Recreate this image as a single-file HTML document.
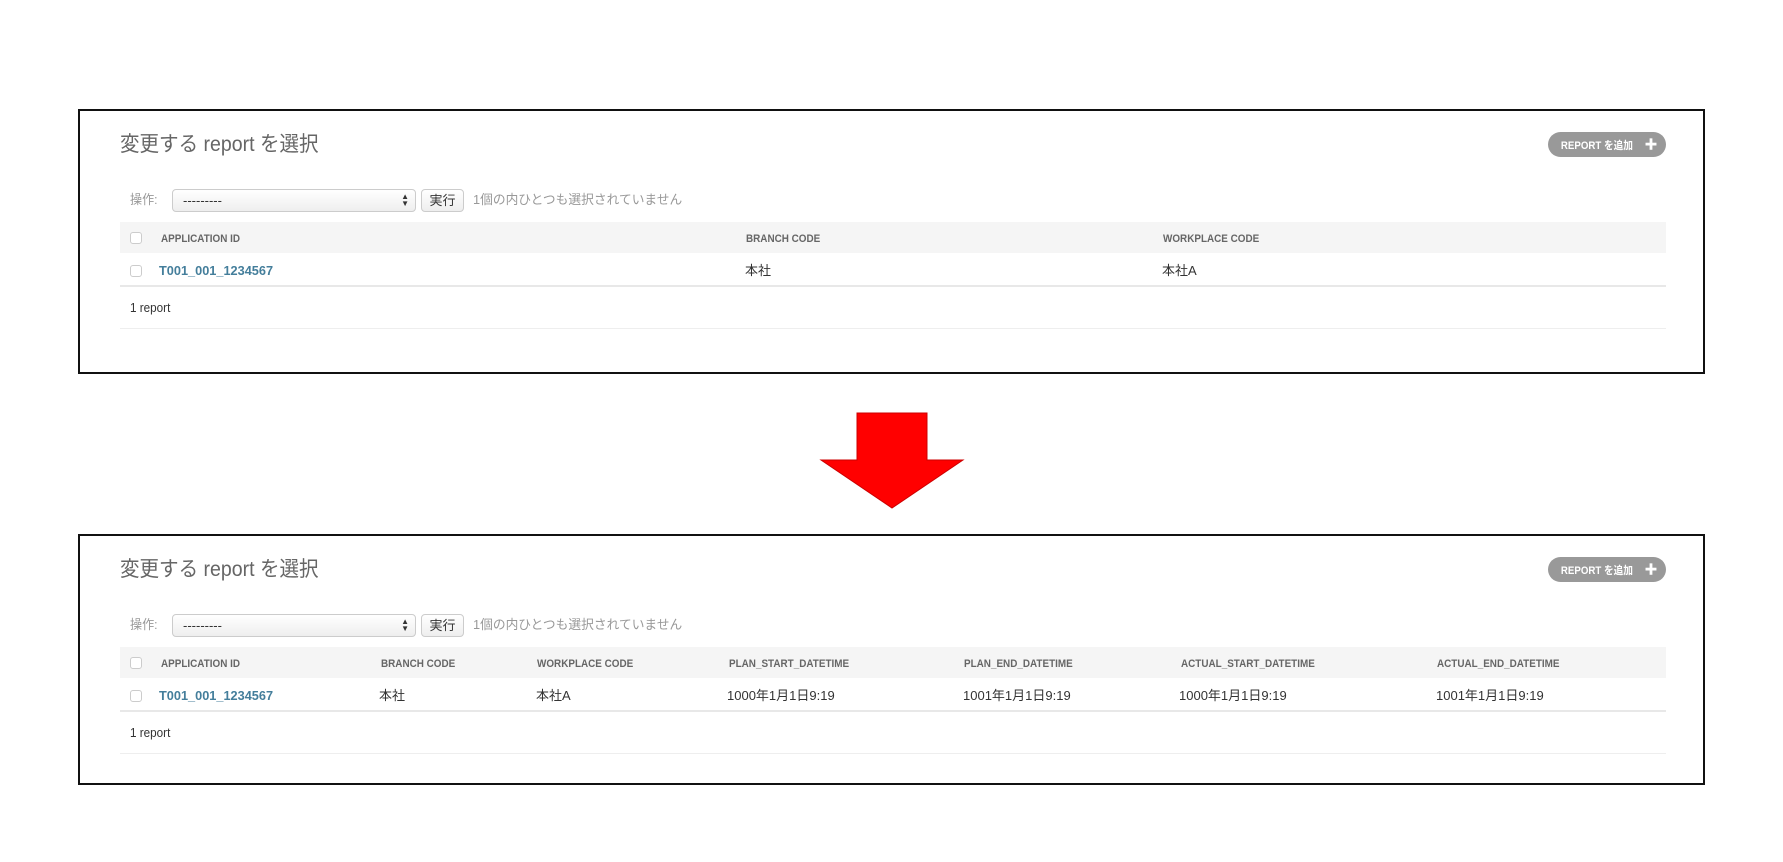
<!DOCTYPE html>
<html><head><meta charset="utf-8"><style>
*{margin:0;padding:0;box-sizing:border-box}
body{width:1783px;height:862px;background:#fff;position:relative;overflow:hidden;font-family:"Liberation Sans","Noto Sans CJK JP",sans-serif;color:#333}
.a{position:absolute;white-space:nowrap;line-height:16px}
.n{transform:scaleX(0.9);transform-origin:left center}
.box{position:absolute;left:78px;width:1627px;border:2px solid #111;background:#fff}
.title{font-size:21px;line-height:24px;color:#666;transform:scaleX(0.93);transform-origin:left center}
.btn{background:#999;color:#fff;border-radius:13px;font-size:11px;font-weight:bold;height:25px;width:118px;line-height:25px;text-align:center}
.lbl{font-size:13px;color:#999;transform:scaleX(0.93);transform-origin:left center}
.sel{height:23px;width:244px;border:1px solid #ccc;border-radius:4px;background:linear-gradient(#fff,#eee);font-size:13px;padding-left:10px;line-height:21px;color:#333}
.go{height:23px;width:43px;border:1px solid #ccc;border-radius:4px;background:linear-gradient(#fff,#eee);font-size:13px;line-height:21px;text-align:center}
.cnt{font-size:13px;color:#999;transform:scaleX(0.98);transform-origin:left center}
.hdr{height:31px;width:1546px;left:120px;background:#f5f5f5}
.row{height:34px;width:1546px;left:120px;border-bottom:2px solid #e8e8e8}
.line{height:1px;width:1546px;left:120px;background:#eee}
.cb{width:12px;height:12px;border:1px solid #ccc;border-radius:3px;background:#fff}
.th{font-size:11px;font-weight:bold;color:#666}
.td{font-size:13px;color:#333}
.lk{font-size:13px;font-weight:bold;color:#447e9b;transform:scaleX(0.98);transform-origin:left center}
.arr{position:absolute;right:6px;font-size:8px;line-height:8px}
</style></head><body>

<div class="box" style="top:109px;height:265px"></div>
<div class="a title" style="left:120px;top:133px">変更する report を選択</div>
<div class="a btn" style="left:1548px;top:132px"><span style="display:inline-block;transform:scaleX(0.88)">REPORT を追加</span> &nbsp;<span style="font-size:13px">✚</span></div>
<div class="a lbl" style="left:130px;top:192px">操作:</div>
<div class="a sel" style="left:172px;top:189px">---------<span class="arr" style="top:3px">▲</span><span class="arr" style="top:10px">▼</span></div>
<div class="a go" style="left:421px;top:189px">実行</div>
<div class="a cnt" style="left:473px;top:192px">1個の内ひとつも選択されていません</div>
<div class="a hdr" style="top:222px"></div>
<div class="a cb" style="left:130px;top:232px"></div>
<div class="a th n" style="left:161px;top:231px">APPLICATION ID</div>
<div class="a th n" style="left:746px;top:231px">BRANCH CODE</div>
<div class="a th n" style="left:1163px;top:231px">WORKPLACE CODE</div>
<div class="a row" style="top:253px"></div>
<div class="a cb" style="left:130px;top:265px"></div>
<div class="a lk" style="left:159px;top:263px">T001_001_1234567</div>
<div class="a td" style="left:745px;top:263px">本社</div>
<div class="a td" style="left:1162px;top:263px">本社A</div>
<div class="a td n" style="left:130px;top:300px">1 report</div>
<div class="a line" style="top:328px"></div>

<svg class="a" style="left:0;top:0" width="1783" height="862"><polygon points="857,413 927,413 927,460 963,460 892,508 821,460 857,460" fill="#f00" stroke="#c00" stroke-width="1"/></svg>

<div class="box" style="top:534px;height:251px"></div>
<div class="a title" style="left:120px;top:558px">変更する report を選択</div>
<div class="a btn" style="left:1548px;top:557px"><span style="display:inline-block;transform:scaleX(0.88)">REPORT を追加</span> &nbsp;<span style="font-size:13px">✚</span></div>
<div class="a lbl" style="left:130px;top:617px">操作:</div>
<div class="a sel" style="left:172px;top:614px">---------<span class="arr" style="top:3px">▲</span><span class="arr" style="top:10px">▼</span></div>
<div class="a go" style="left:421px;top:614px">実行</div>
<div class="a cnt" style="left:473px;top:617px">1個の内ひとつも選択されていません</div>
<div class="a hdr" style="top:647px"></div>
<div class="a cb" style="left:130px;top:657px"></div>
<div class="a th n" style="left:161px;top:656px">APPLICATION ID</div>
<div class="a th n" style="left:381px;top:656px">BRANCH CODE</div>
<div class="a th n" style="left:537px;top:656px">WORKPLACE CODE</div>
<div class="a th n" style="left:729px;top:656px">PLAN_START_DATETIME</div>
<div class="a th n" style="left:964px;top:656px">PLAN_END_DATETIME</div>
<div class="a th n" style="left:1181px;top:656px">ACTUAL_START_DATETIME</div>
<div class="a th n" style="left:1437px;top:656px">ACTUAL_END_DATETIME</div>
<div class="a row" style="top:678px"></div>
<div class="a cb" style="left:130px;top:690px"></div>
<div class="a lk" style="left:159px;top:688px">T001_001_1234567</div>
<div class="a td" style="left:379px;top:688px">本社</div>
<div class="a td" style="left:536px;top:688px">本社A</div>
<div class="a td" style="left:727px;top:688px">1000年1月1日9:19</div>
<div class="a td" style="left:963px;top:688px">1001年1月1日9:19</div>
<div class="a td" style="left:1179px;top:688px">1000年1月1日9:19</div>
<div class="a td" style="left:1436px;top:688px">1001年1月1日9:19</div>
<div class="a td n" style="left:130px;top:725px">1 report</div>
<div class="a line" style="top:753px"></div>
</body></html>
